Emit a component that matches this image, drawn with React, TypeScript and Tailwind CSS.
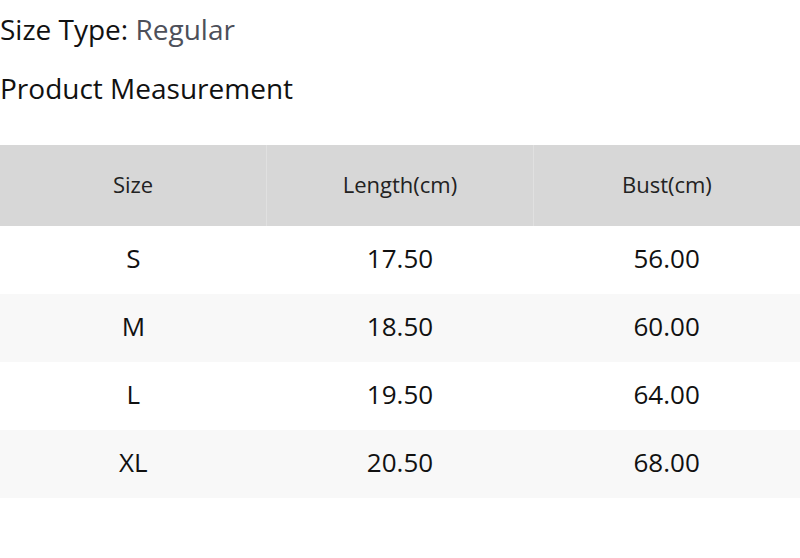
const rows = [
  { size: "S", length: "17.50", bust: "56.00" },
  { size: "M", length: "18.50", bust: "60.00" },
  { size: "L", length: "19.50", bust: "64.00" },
  { size: "XL", length: "20.50", bust: "68.00" },
];

export default function App() {
  return (
    <div className="w-[800px] h-[558px] bg-white text-[#111] font-['Open_Sans',sans-serif] overflow-hidden">
      <div className="pt-[10px] text-[28px] leading-[38px]">
        Size Type: <span className="text-[#4d505a]">Regular</span>
      </div>
      <div className="mt-[21px] text-[28px] leading-[38px]">Product Measurement</div>

      <table className="mt-[38px] w-[800px] table-fixed border-collapse">
        <thead>
          <tr className="bg-[#d7d7d7] h-[81px]">
            <th className="pb-[3px] font-normal text-[22px] text-[#222] border-r border-[#e0e0e0]">Size</th>
            <th className="pb-[3px] font-normal text-[22px] text-[#222] border-r border-[#e0e0e0]">Length(cm)</th>
            <th className="pb-[3px] font-normal text-[22px] text-[#222]">Bust(cm)</th>
          </tr>
        </thead>
        <tbody>
          {rows.map((r, i) => (
            <tr key={r.size} className={`h-[68px] ${i % 2 === 1 ? "bg-[#f8f8f8]" : "bg-white"}`}>
              <td className="pb-[3px] text-center text-[26px]">{r.size}</td>
              <td className="pb-[3px] text-center text-[26px]">{r.length}</td>
              <td className="pb-[3px] text-center text-[26px]">{r.bust}</td>
            </tr>
          ))}
        </tbody>
      </table>
    </div>
  );
}
